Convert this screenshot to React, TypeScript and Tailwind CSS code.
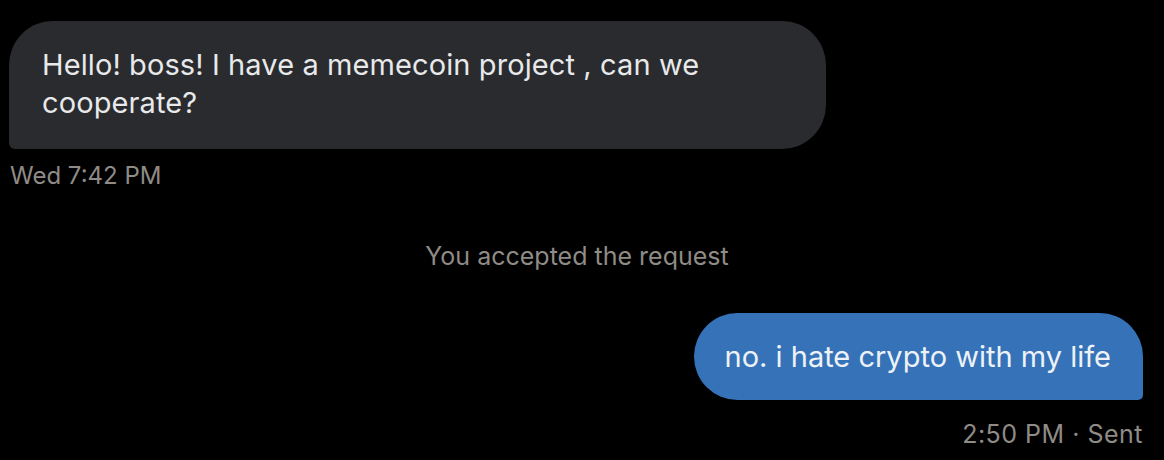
import React from "react";

const FONT = { fontFamily: 'Inter, "Noto Sans", sans-serif' };

export default function App() {
  return (
    <div
      className="flex h-[460px] w-full flex-col overflow-hidden bg-black pl-[9px] pr-[21px] pt-[21px]"
      style={FONT}
    >
      {/* incoming */}
      <div className="flex flex-col items-start">
        <div className="w-[817px] rounded-[44px] rounded-bl-[6px] bg-[#2a2b2e] pb-[27px] pl-[33px] pr-[40px] pt-[25px] text-[29px] leading-[38px] tracking-[0.1px] text-[#e7e9ea]">
          Hello! boss! I have a memecoin project , can we cooperate?
        </div>
        <div className="mt-[13px] pl-[1px] text-[24px] leading-[28px] text-[#8f8b86]">
          Wed 7:42 PM
        </div>
      </div>

      {/* system */}
      <div className="mt-[51px] pl-[2px] text-center text-[25px] leading-[30px] text-[#8f8b86]">
        You accepted the request
      </div>

      {/* outgoing */}
      <div className="mt-[42px] flex flex-col items-end">
        <div className="flex h-[87px] items-center rounded-[44px] rounded-br-[5px] bg-[#3572b8] pl-[31px] pr-[32px] text-[29px] text-[#eef2f7]">
          no. i hate crypto with my life
        </div>
        <div className="mt-[19px] text-[25px] leading-[30px] tracking-[0.5px] text-[#8f8b86]">
          2:50 PM · Sent
        </div>
      </div>
    </div>
  );
}
